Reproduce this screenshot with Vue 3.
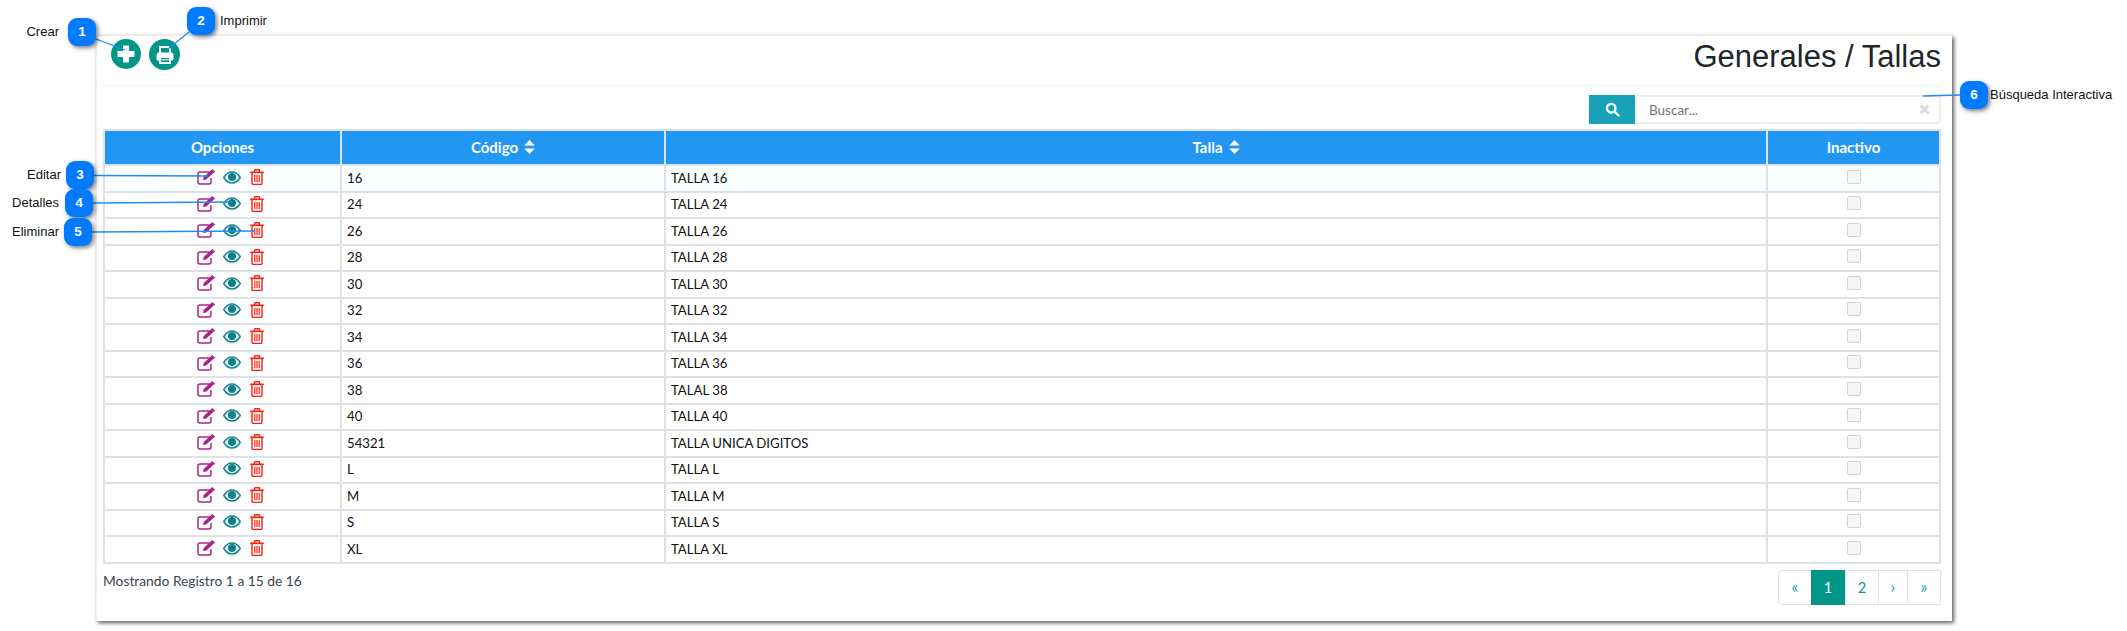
<script setup>
const rows = [
  ['16', 'TALLA 16'], ['24', 'TALLA 24'], ['26', 'TALLA 26'], ['28', 'TALLA 28'], ['30', 'TALLA 30'],
  ['32', 'TALLA 32'], ['34', 'TALLA 34'], ['36', 'TALLA 36'], ['38', 'TALAL 38'], ['40', 'TALLA 40'],
  ['54321', 'TALLA UNICA DIGITOS'], ['L', 'TALLA L'], ['M', 'TALLA M'], ['S', 'TALLA S'], ['XL', 'TALLA XL']
]
const markers = [
  { n: 1, x: 82, y: 32 }, { n: 2, x: 201, y: 21 }, { n: 3, x: 80, y: 175 },
  { n: 4, x: 79, y: 203 }, { n: 5, x: 78, y: 232 }, { n: 6, x: 1974, y: 95 }
]
const labels = [
  { t: 'Crear', right: 2068, y: 32 }, { t: 'Editar', right: 2066, y: 175 },
  { t: 'Detalles', right: 2068, y: 203 }, { t: 'Eliminar', right: 2068, y: 232 }
]
const leftLabels = [
  { t: 'Imprimir', x: 220, y: 21 }, { t: 'Búsqueda Interactiva', x: 1990, y: 95 }
]
const lines = [
  [96, 39, 125, 50], [189, 32, 168, 49], [94, 175.5, 208, 176],
  [93, 203, 232, 202], [92, 232, 255, 231], [1923, 96, 1960, 95]
]
</script>

<template>
  <div class="page">
    <section class="card">
      <header class="top">
        <div class="actions">
          <button class="round r1">
            <svg width="18" height="18" viewBox="0 0 18 18"><path d="M6 .5h6v5.500h5.500v6H12v5.500H6V12H.5V6H6z" fill="#fff" /></svg>
          </button>
          <button class="round">
            <svg width="20" height="20" viewBox="0 0 20 20" fill="none" stroke="#fff">
              <path d="M5 8V2h8l2 2v4" stroke-width="2" />
              <path d="M5 15H2V9.500A1.500 1.500 0 0 1 3.500 8h13A1.500 1.500 0 0 1 18 9.500V15h-3" fill="#fff" stroke-width="1" />
              <path d="M5 12h10v6H5z" fill="#009688" stroke-width="2" />
              <path d="M6 14.800h8" stroke-width="1" />
            </svg>
          </button>
        </div>
        <h1 class="title">Generales / Tallas</h1>
      </header>

      <div class="search">
        <button class="search-btn">
          <svg width="15" height="15" viewBox="0 0 15 15" fill="none" stroke="#fff" stroke-width="2.400">
            <circle cx="6.200" cy="6.200" r="4.300" /><path d="M9.500 9.500l4 4" stroke-linecap="round" />
          </svg>
        </button>
        <div class="search-box">
          <span class="placeholder">Buscar...</span>
          <svg width="11" height="11" viewBox="0 0 11 11" stroke="#d5dedd" stroke-width="3"><path d="M1.500 1.500l8 8M9.500 1.500l-8 8" /></svg>
        </div>
      </div>

      <div class="grid">
        <div class="row head">
          <div class="cell">Opciones</div>
          <div class="cell">Código <svg class="sort" width="11" height="14" viewBox="0 0 9 12" fill="#fff"><path d="M4.500 0L9 4.800H0zM4.500 12L0 7.200h9z" /></svg></div>
          <div class="cell">Talla <svg class="sort" width="11" height="14" viewBox="0 0 9 12" fill="#fff"><path d="M4.500 0L9 4.800H0zM4.500 12L0 7.200h9z" /></svg></div>
          <div class="cell">Inactivo</div>
        </div>
        <div v-for="r in rows" :key="r[0]" class="row body">
          <div class="cell ops">
            <svg width="19" height="16" viewBox="0 0 19 16" fill="none">
              <path d="M12.500 3H3a2 2 0 0 0-2 2v8a2 2 0 0 0 2 2h9a2 2 0 0 0 2-2V9" stroke="#b0247c" stroke-width="1.500" />
              <path d="M6 11l.7-3L14.500 .8l2.600 2.400-7.800 7.200z" fill="#a8208a" />
              <path d="M15.300 0l3 2.700-.9.900-3-2.700z" fill="#a8208a" />
            </svg>
            <svg width="18" height="13" viewBox="0 0 18 13">
              <path d="M.8 6.500C3 3 5.800 1 9 1s6 2 8.200 5.500C15 10 12.200 12 9 12S3 10 .8 6.500z" fill="none" stroke="#14868f" stroke-width="1.500" />
              <circle cx="9" cy="6" r="4" fill="#0f7f8c" />
            </svg>
            <svg class="trash" width="14" height="16" viewBox="0 0 14 16" fill="none" stroke="#ff1f0f" stroke-width="1.400">
              <path d="M.2 3.300h13.600" stroke-width="1.600" />
              <path d="M4.500 3V1.300a.6.600 0 0 1 .6-.6h3.800a.6.600 0 0 1 .6.600V3" />
              <path d="M2 3.500v10.800A1.100 1.100 0 0 0 3.100 15.400h7.800a1.100 1.100 0 0 0 1.100-1.100V3.500" />
              <path d="M4.800 6v7M7 6v7M9.200 6v7" stroke-width="1.200" />
            </svg>
          </div>
          <div class="cell txt">{{ r[0] }}</div>
          <div class="cell txt">{{ r[1] }}</div>
          <div class="cell"><span class="box"></span></div>
        </div>
      </div>

      <footer class="foot">
        <span class="count">Mostrando Registro 1 a 15 de 16</span>
        <nav class="pager">
          <a class="p p1 glyph">«</a><a class="p active">1</a><a class="p">2</a><a class="p p4 glyph">›</a><a class="p glyph">»</a>
        </nav>
      </footer>
    </section>

    <svg class="lines" width="2127" height="631">
      <line v-for="(l, i) in lines" :key="i" :x1="l[0]" :y1="l[1]" :x2="l[2]" :y2="l[3]" stroke="#1e8cf5" stroke-width="1.300" />
    </svg>
    <div v-for="m in markers" :key="m.n" class="marker" :style="{ left: m.x - 14 + 'px', top: m.y - 14 + 'px' }">{{ m.n }}</div>
    <span v-for="l in labels" :key="l.t" class="lab" :style="{ right: l.right + 'px', top: l.y - 9 + 'px' }">{{ l.t }}</span>
    <span v-for="l in leftLabels" :key="l.t" class="lab" :style="{ left: l.x + 'px', top: l.y - 9 + 'px' }">{{ l.t }}</span>
  </div>
</template>

<style>
html, body { margin: 0; background: #fff; }
</style>

<style scoped>
.page {
  position: relative;
  width: 2127px;
  height: 631px;
  overflow: hidden;
  background: #fff;
  font-family: Lato, "Liberation Sans", sans-serif;
  padding: 35px 0 0 96px;
  box-sizing: border-box;
}
.card {
  width: 1856px;
  height: 586px;
  box-sizing: border-box;
  padding: 0 11px 0 6px;
  background: #fff;
  border-top: 1px solid #eee;
  border-left: 1px solid #eee;
  box-shadow: 2px 2px 4px rgba(40, 40, 40, .75);
}
.top {
  height: 50px;
  box-sizing: border-box;
  display: flex;
  justify-content: space-between;
  align-items: flex-start;
  border-bottom: 1px solid #eee;
}
.actions { display: flex; gap: 8px; padding: 3px 0 0 8px; }
.round {
  width: 31px;
  height: 31px;
  padding: 0;
  border: 0;
  border-radius: 50%;
  background: #009688;
  display: flex;
  align-items: center;
  justify-content: center;
}
.r1 { width: 30px; height: 30px; }
.title {
  margin: 3px 0 0;
  font: 400 31px/36px "Liberation Sans", sans-serif;
  color: #212529;
}
.search { display: flex; justify-content: flex-end; margin-top: 9px; height: 29px; }
.search-btn {
  width: 46px;
  padding: 0;
  border: 0;
  background: #17a2b8;
  display: flex;
  align-items: center;
  justify-content: center;
}
.search-box {
  width: 306px;
  box-sizing: border-box;
  border: 2px solid #eceeef;
  border-radius: 0 3px 3px 0;
  display: flex;
  align-items: center;
  justify-content: space-between;
  padding: 0 9px 0 12px;
}
.placeholder { font-size: 13.500px; color: #6c757d; }
.grid {
  margin-top: 5px;
  border: 2px solid #dee2e6;
  font-size: 13.200px;
  color: #111;
}
.row {
  display: grid;
  grid-template-columns: 235px 324px 1102px 1fr;
  box-sizing: border-box;
}
.head {
  height: 33px;
  background: #2196f3;
  color: #fff;
  font-weight: 700;
  font-size: 15px;
}
.head .cell { gap: 6px; padding-bottom: 2px; }
.body { height: 26.500px; border-top: 2px solid #dee2e6; }
.body:nth-child(2) { background: #fbfeff; }
.cell {
  display: flex;
  align-items: center;
  justify-content: center;
  border-left: 2px solid #dee2e6;
  box-sizing: border-box;
}
.cell:first-child { border-left: 0; }
.txt { justify-content: flex-start; padding: 0 0 1px 5px; line-height: 16px; }
.ops { gap: 7px; padding: 0 0 2px 15px; }
.trash { margin-left: 2px; }
.box {
  width: 12px;
  height: 12px;
  margin-top: -3px;
  background: #f6f6f6;
  border: 1px solid #d3d3d3;
  border-radius: 2px;
}
.foot {
  display: flex;
  justify-content: space-between;
  align-items: flex-start;
  margin-top: 6px;
}
.count { font-size: 13.800px; line-height: 18px; color: #3b4550; margin-top: 2px; }
.pager {
  display: flex;
  height: 35px;
  box-sizing: border-box;
  border: 1px solid #dee2e6;
  border-radius: 4px 0 0 4px;
  color: #009688;
}
.p {
  width: 33px;
  box-sizing: border-box;
  display: flex;
  align-items: center;
  justify-content: center;
  border-left: 1px solid #dee2e6;
  font-size: 14.500px;
}
.glyph { font-size: 17px; color: #17a2b8; padding-bottom: 2px; }
.p1 { border-left: 0; width: 32px; }
.p4 { width: 29px; }
.active { background: #009688; color: #fff; border: 0; margin: -1px 0; width: 34px; }
.lines { position: absolute; left: 0; top: 0; pointer-events: none; }
.marker {
  position: absolute;
  width: 28px;
  height: 28px;
  border-radius: 9px;
  background: #007bff;
  box-shadow: 2px 2px 4px rgba(0, 0, 0, .5);
  color: #fff;
  font: 700 13.500px/28px "Liberation Sans", sans-serif;
  text-align: center;
}
.lab {
  position: absolute;
  font: 400 13px/18px "Liberation Sans", sans-serif;
  color: #111;
  white-space: nowrap;
}
</style>
